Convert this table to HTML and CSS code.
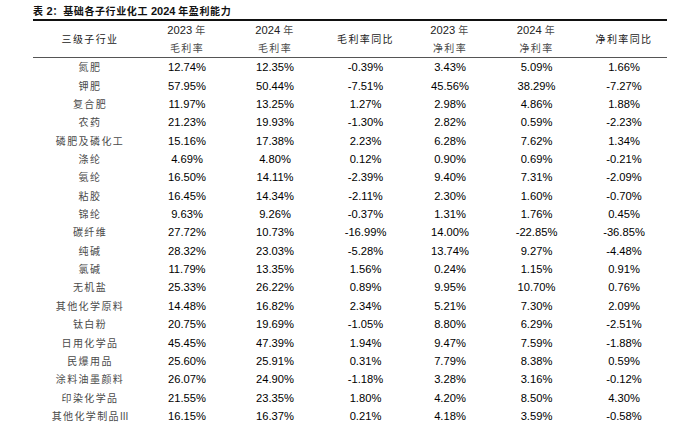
FILE: index.html
```html
<!DOCTYPE html>
<html lang="zh">
<head>
<meta charset="utf-8">
<link rel="stylesheet" href="styles.css">
</head>
<body>
<div class="wrap">
  <div class="title">表 <span class="num">2</span>：基础各子行业化工 <span class="num">2024</span> 年盈利能力</div>
  <table class="tbl">
    <colgroup>
      <col class="c1"><col class="c2"><col class="c3"><col class="c4"><col class="c5"><col class="c6"><col class="c7">
    </colgroup>
    <thead>
      <tr>
        <th class="cn">三级子行业</th>
        <th><span class="num">2023</span> <span class="cn">年</span><br><span class="cn">毛利率</span></th>
        <th><span class="num">2024</span> <span class="cn">年</span><br><span class="cn">毛利率</span></th>
        <th class="cn">毛利率同比</th>
        <th><span class="num">2023</span> <span class="cn">年</span><br><span class="cn">净利率</span></th>
        <th><span class="num">2024</span> <span class="cn">年</span><br><span class="cn">净利率</span></th>
        <th class="cn">净利率同比</th>
      </tr>
    </thead>
    <tbody>
      <tr><td class="cn">氮肥</td><td>12.74%</td><td>12.35%</td><td>-0.39%</td><td>3.43%</td><td>5.09%</td><td>1.66%</td></tr>
      <tr><td class="cn">钾肥</td><td>57.95%</td><td>50.44%</td><td>-7.51%</td><td>45.56%</td><td>38.29%</td><td>-7.27%</td></tr>
      <tr><td class="cn">复合肥</td><td>11.97%</td><td>13.25%</td><td>1.27%</td><td>2.98%</td><td>4.86%</td><td>1.88%</td></tr>
      <tr><td class="cn">农药</td><td>21.23%</td><td>19.93%</td><td>-1.30%</td><td>2.82%</td><td>0.59%</td><td>-2.23%</td></tr>
      <tr><td class="cn">磷肥及磷化工</td><td>15.16%</td><td>17.38%</td><td>2.23%</td><td>6.28%</td><td>7.62%</td><td>1.34%</td></tr>
      <tr><td class="cn">涤纶</td><td>4.69%</td><td>4.80%</td><td>0.12%</td><td>0.90%</td><td>0.69%</td><td>-0.21%</td></tr>
      <tr><td class="cn">氨纶</td><td>16.50%</td><td>14.11%</td><td>-2.39%</td><td>9.40%</td><td>7.31%</td><td>-2.09%</td></tr>
      <tr><td class="cn">粘胶</td><td>16.45%</td><td>14.34%</td><td>-2.11%</td><td>2.30%</td><td>1.60%</td><td>-0.70%</td></tr>
      <tr><td class="cn">锦纶</td><td>9.63%</td><td>9.26%</td><td>-0.37%</td><td>1.31%</td><td>1.76%</td><td>0.45%</td></tr>
      <tr><td class="cn">碳纤维</td><td>27.72%</td><td>10.73%</td><td>-16.99%</td><td>14.00%</td><td>-22.85%</td><td>-36.85%</td></tr>
      <tr><td class="cn">纯碱</td><td>28.32%</td><td>23.03%</td><td>-5.28%</td><td>13.74%</td><td>9.27%</td><td>-4.48%</td></tr>
      <tr><td class="cn">氯碱</td><td>11.79%</td><td>13.35%</td><td>1.56%</td><td>0.24%</td><td>1.15%</td><td>0.91%</td></tr>
      <tr><td class="cn">无机盐</td><td>25.33%</td><td>26.22%</td><td>0.89%</td><td>9.95%</td><td>10.70%</td><td>0.76%</td></tr>
      <tr><td class="cn">其他化学原料</td><td>14.48%</td><td>16.82%</td><td>2.34%</td><td>5.21%</td><td>7.30%</td><td>2.09%</td></tr>
      <tr><td class="cn">钛白粉</td><td>20.75%</td><td>19.69%</td><td>-1.05%</td><td>8.80%</td><td>6.29%</td><td>-2.51%</td></tr>
      <tr><td class="cn">日用化学品</td><td>45.45%</td><td>47.39%</td><td>1.94%</td><td>9.47%</td><td>7.59%</td><td>-1.88%</td></tr>
      <tr><td class="cn">民爆用品</td><td>25.60%</td><td>25.91%</td><td>0.31%</td><td>7.79%</td><td>8.38%</td><td>0.59%</td></tr>
      <tr><td class="cn">涂料油墨颜料</td><td>26.07%</td><td>24.90%</td><td>-1.18%</td><td>3.28%</td><td>3.16%</td><td>-0.12%</td></tr>
      <tr><td class="cn">印染化学品</td><td>21.55%</td><td>23.35%</td><td>1.80%</td><td>4.20%</td><td>8.50%</td><td>4.30%</td></tr>
      <tr><td class="cn">其他化学制品<span class="num roman">III</span></td><td>16.15%</td><td>16.37%</td><td>0.21%</td><td>4.18%</td><td>3.59%</td><td>-0.58%</td></tr>
    </tbody>
  </table>
</div>
</body>
</html>
```

FILE: styles.css
```css
html, body {
  margin: 0;
  padding: 0;
  background: #ffffff;
}

.wrap {
  padding: 0 0 0 33px;
  width: 634px;
}

.title {
  height: 19px;
  line-height: 21px;
  font-family: "Noto Sans CJK SC", sans-serif;
  font-weight: 700;
  font-size: 10px;
  letter-spacing: 0.6px;
  color: #111;
  white-space: nowrap;
}

.title .num {
  font-family: "Liberation Sans", Arial, sans-serif;
  font-weight: 700;
  font-size: 11px;
  letter-spacing: 0;
}

.tbl {
  width: 634px;
  border-collapse: collapse;
  table-layout: fixed;
  font-family: "Liberation Sans", Arial, sans-serif;
  font-size: 11.2px;
  color: #000;
}

.c1 { width: 114px; }
.c2 { width: 80px; }
.c3 { width: 96px; }
.c4 { width: 85px; }
.c5 { width: 84px; }
.c6 { width: 89px; }
.c7 { width: 86px; }

.tbl thead tr {
  border-top: 2px solid #111;
  border-bottom: 1.5px solid #555;
}

.tbl th {
  font-weight: 400;
  padding: 0;
  height: 36px;
  line-height: 18px;
  text-align: center;
  vertical-align: middle;
  color: #222;
}

.tbl td {
  padding: 0;
  height: 18.37px;
  line-height: 18px;
  text-align: center;
  vertical-align: middle;
  white-space: nowrap;
}

.cn {
  font-family: "Noto Sans CJK SC", sans-serif;
  font-size: 10px;
  letter-spacing: 1.4px;
  color: #4a4a4a;
  font-weight: 400;
}

.num {
  font-family: "Liberation Sans", Arial, sans-serif;
  font-size: 11.2px;
  letter-spacing: 0;
}

.roman {
  color: #4a4a4a;
  font-size: 10px;
}
```
